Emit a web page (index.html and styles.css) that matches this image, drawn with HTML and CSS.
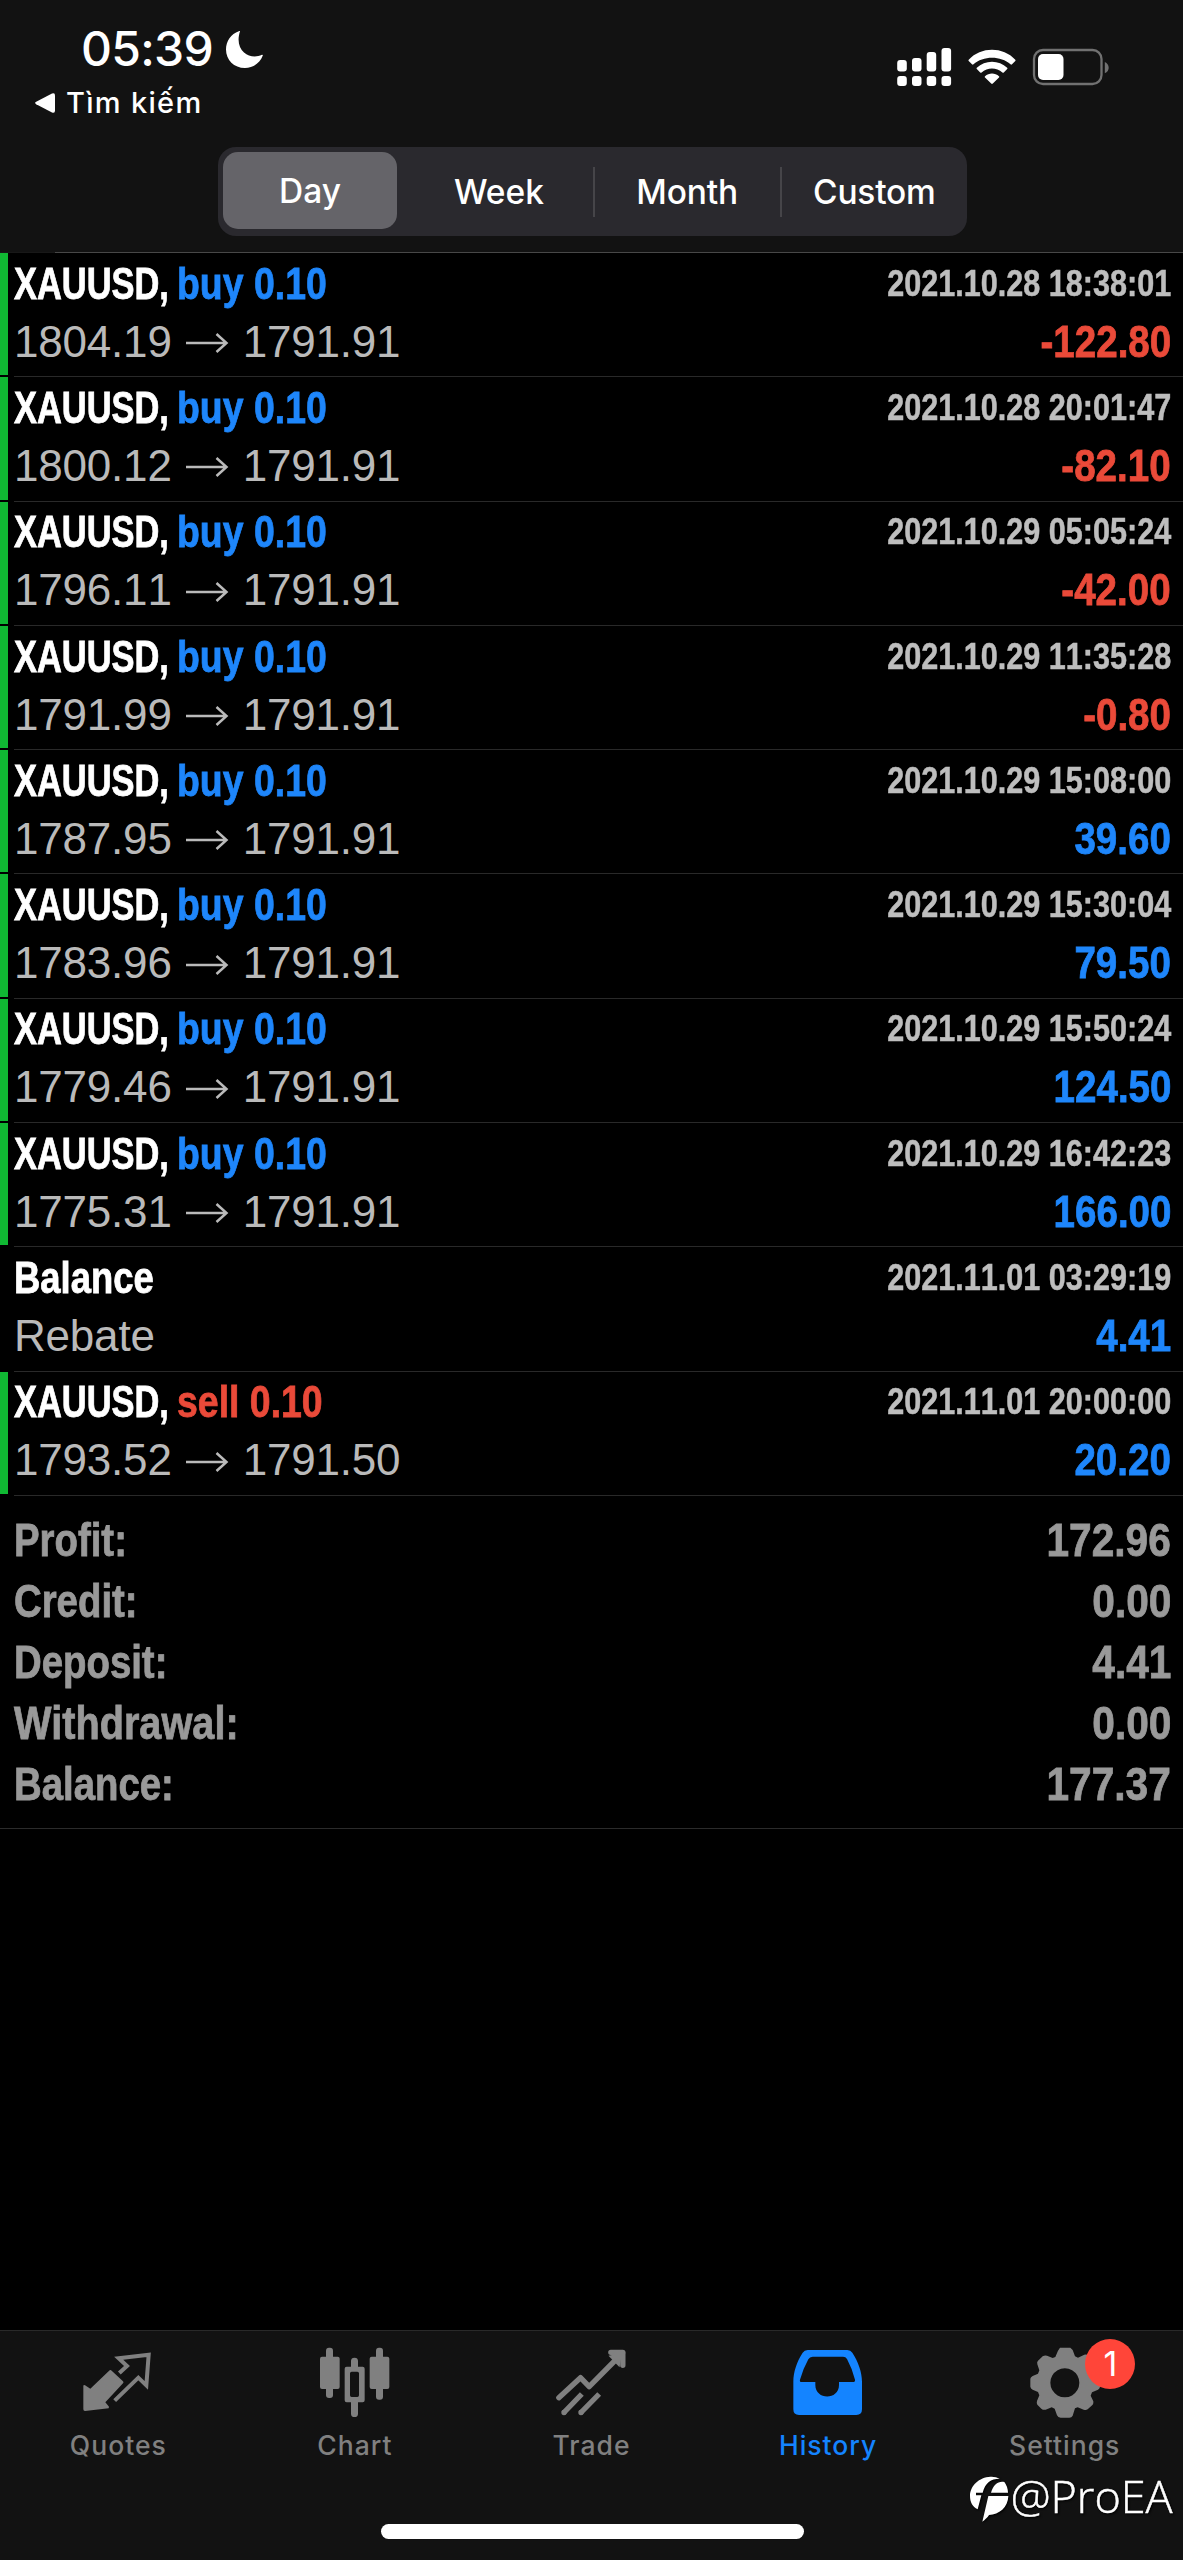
FILE: index.html
```html
<!DOCTYPE html>
<html lang="en">
<head>
<meta charset="utf-8">
<title>History</title>
<link rel="stylesheet" href="styles.css">
</head>
<body>
<div class="screen">
  <header class="header">
    <div class="status">
      <div class="status-left">
        <div class="clock"><span class="time">05:39</span>
          <svg class="moon" viewBox="0 0 37 37"><path d="M14 .3C11 10 13 17 18 21.5c5 4.300 12 5 18 2.300.6-.2 1 .2.8.8C34 32 27 37 19 37 8 37 0 29 0 18.500 0 10 5 3 12.800.2 13.800-.2 14.300-.2 14 .3Z"/></svg>
        </div>
        <div class="back">
          <svg class="back-arrow" viewBox="0 0 20 20"><path d="M1.200 8.800 17 .6Q20-.6 20 2.500v15Q20 20.600 17 19.400L1.200 11.200Q-1 10 1.200 8.800Z"/></svg>
          <span class="back-text">Tìm kiếm</span>
        </div>
      </div>
      <svg class="indicators" viewBox="897 45 213 44">
        <g fill="#fff">
          <rect x="897.200" y="60" width="9.600" height="11.500" rx="3"/><rect x="912" y="58" width="9.500" height="13.500" rx="3"/><rect x="926.700" y="52" width="9.500" height="19.500" rx="3"/><rect x="941.500" y="48" width="9.600" height="23.500" rx="3"/>
          <rect x="897.200" y="76" width="9.600" height="10" rx="3"/><rect x="912" y="76" width="9.500" height="10" rx="3"/><rect x="926.700" y="76" width="9.500" height="10" rx="3"/><rect x="941.500" y="76" width="9.600" height="10" rx="3"/>
          <path d="M968.700 59.700C981 46.400 1003 46.400 1015.300 59.700q.6.700 0 1.300l-3.300 3.300q-.8.700-1.500 0C1001 55.500 983 55.500 973.500 64.300q-.7.700-1.500 0L968.700 61q-.6-.6 0-1.300Z"/>
          <path d="M976.800 67.800C985 59.700 999 59.700 1007.200 67.800q.6.700 0 1.300l-3.400 3.400q-.7.600-1.400 0C996.500 67.300 987.500 67.300 981.600 72.500q-.7.600-1.400 0L976.800 69.100q-.6-.6 0-1.300Z"/>
          <path d="M985 76.200c4-3.600 10-3.600 14 0q.7.700 0 1.300l-6.200 6.100q-.8.800-1.600 0L985 77.500q-.7-.6 0-1.300Z"/>
          <rect x="1038" y="54" width="25.500" height="26" rx="5"/>
        </g>
        <rect x="1034" y="50" width="67.500" height="34" rx="9" fill="none" stroke="#717171" stroke-width="2.300"/>
        <path d="M1104.800 62c5.200 2.300 5.200 9 0 11.300Z" fill="#717171"/>
      </svg>
    </div>
    <nav class="segments">
      <div class="segment active"><span>Day</span></div>
      <div class="segment"><span>Week</span></div>
      <div class="segment split"><span>Month</span></div>
      <div class="segment split"><span>Custom</span></div>
    </nav>
  </header>

  <main class="content">
    <div class="deal"><i class="bar"></i><div class="deal-body">
      <div class="line"><span class="title"><b class="symbol">XAUUSD,</b><b class="side buy">buy 0.10</b></span><b class="date">2021.10.28 18:38:01</b></div>
      <div class="line"><span class="prices">1804.19<svg class="arrow" viewBox="0 0 44 22"><path d="M1 11H41M31.500 2 41.500 11 31.500 20"/></svg>1791.91</span><b class="amount loss">-122.80</b></div></div></div>
    <div class="deal"><i class="bar"></i><div class="deal-body">
      <div class="line"><span class="title"><b class="symbol">XAUUSD,</b><b class="side buy">buy 0.10</b></span><b class="date">2021.10.28 20:01:47</b></div>
      <div class="line"><span class="prices">1800.12<svg class="arrow" viewBox="0 0 44 22"><path d="M1 11H41M31.500 2 41.500 11 31.500 20"/></svg>1791.91</span><b class="amount loss">-82.10</b></div></div></div>
    <div class="deal"><i class="bar"></i><div class="deal-body">
      <div class="line"><span class="title"><b class="symbol">XAUUSD,</b><b class="side buy">buy 0.10</b></span><b class="date">2021.10.29 05:05:24</b></div>
      <div class="line"><span class="prices">1796.11<svg class="arrow" viewBox="0 0 44 22"><path d="M1 11H41M31.500 2 41.500 11 31.500 20"/></svg>1791.91</span><b class="amount loss">-42.00</b></div></div></div>
    <div class="deal"><i class="bar"></i><div class="deal-body">
      <div class="line"><span class="title"><b class="symbol">XAUUSD,</b><b class="side buy">buy 0.10</b></span><b class="date">2021.10.29 11:35:28</b></div>
      <div class="line"><span class="prices">1791.99<svg class="arrow" viewBox="0 0 44 22"><path d="M1 11H41M31.500 2 41.500 11 31.500 20"/></svg>1791.91</span><b class="amount loss">-0.80</b></div></div></div>
    <div class="deal"><i class="bar"></i><div class="deal-body">
      <div class="line"><span class="title"><b class="symbol">XAUUSD,</b><b class="side buy">buy 0.10</b></span><b class="date">2021.10.29 15:08:00</b></div>
      <div class="line"><span class="prices">1787.95<svg class="arrow" viewBox="0 0 44 22"><path d="M1 11H41M31.500 2 41.500 11 31.500 20"/></svg>1791.91</span><b class="amount gain">39.60</b></div></div></div>
    <div class="deal"><i class="bar"></i><div class="deal-body">
      <div class="line"><span class="title"><b class="symbol">XAUUSD,</b><b class="side buy">buy 0.10</b></span><b class="date">2021.10.29 15:30:04</b></div>
      <div class="line"><span class="prices">1783.96<svg class="arrow" viewBox="0 0 44 22"><path d="M1 11H41M31.500 2 41.500 11 31.500 20"/></svg>1791.91</span><b class="amount gain">79.50</b></div></div></div>
    <div class="deal"><i class="bar"></i><div class="deal-body">
      <div class="line"><span class="title"><b class="symbol">XAUUSD,</b><b class="side buy">buy 0.10</b></span><b class="date">2021.10.29 15:50:24</b></div>
      <div class="line"><span class="prices">1779.46<svg class="arrow" viewBox="0 0 44 22"><path d="M1 11H41M31.500 2 41.500 11 31.500 20"/></svg>1791.91</span><b class="amount gain">124.50</b></div></div></div>
    <div class="deal"><i class="bar"></i><div class="deal-body">
      <div class="line"><span class="title"><b class="symbol">XAUUSD,</b><b class="side buy">buy 0.10</b></span><b class="date">2021.10.29 16:42:23</b></div>
      <div class="line"><span class="prices">1775.31<svg class="arrow" viewBox="0 0 44 22"><path d="M1 11H41M31.500 2 41.500 11 31.500 20"/></svg>1791.91</span><b class="amount gain">166.00</b></div></div></div>
    <div class="deal"><i class="bar none"></i><div class="deal-body">
      <div class="line"><span class="title"><b class="symbol wide">Balance</b></span><b class="date">2021.11.01 03:29:19</b></div>
      <div class="line"><span class="prices">Rebate</span><b class="amount gain">4.41</b></div></div></div>
    <div class="deal"><i class="bar"></i><div class="deal-body">
      <div class="line"><span class="title"><b class="symbol">XAUUSD,</b><b class="side sell">sell 0.10</b></span><b class="date">2021.11.01 20:00:00</b></div>
      <div class="line"><span class="prices">1793.52<svg class="arrow" viewBox="0 0 44 22"><path d="M1 11H41M31.500 2 41.500 11 31.500 20"/></svg>1791.50</span><b class="amount gain">20.20</b></div></div></div>

    <section class="summary">
      <div class="total"><b>Profit:</b><b class="value">172.96</b></div>
      <div class="total"><b>Credit:</b><b class="value">0.00</b></div>
      <div class="total"><b>Deposit:</b><b class="value">4.41</b></div>
      <div class="total"><b class="long">Withdrawal:</b><b class="value">0.00</b></div>
      <div class="total"><b>Balance:</b><b class="value">177.37</b></div>
    </section>
  </main>

  <footer class="footer">
    <nav class="tabs">
      <div class="tab">
        <svg viewBox="235 99 240 240"><path d="M330 181q3-2 6 1l34 32q3 3 0 6l-53 57 11 13-1 5-71 8q-5 0-5-5V229q0-6 5-3l16 10Z" fill="currentColor"/><path d="M359 189 382 168 357 145 447 134 440 226 416 203 345 272" fill="none" stroke="currentColor" stroke-width="12"/></svg>
        <span>Quotes</span></div>
      <div class="tab">
        <svg viewBox="945 99 240 240" fill="currentColor"><rect x="978" y="113" width="21" height="151" rx="9"/><rect x="960" y="140" width="59" height="97" rx="6"/><rect x="1128" y="113" width="21" height="156" rx="9"/><rect x="1109" y="140" width="59" height="97" rx="6"/><path fill-rule="evenodd" d="M1053 153q0-10 10.500-10t10.500 10v17h14q6 0 6 6v95q0 6-6 6h-14v34q0 10-10.500 10t-10.500-10v-34h-13q-6 0-6-6v-95q0-6 6-6h13ZM1055 185q-5 0-5 5v66q0 5 5 5h17q5 0 5-5v-66q0-5-5-5Z"/></svg>
        <span>Chart</span></div>
      <div class="tab">
        <svg viewBox="274.500 99 240 240" fill="none" stroke="currentColor" stroke-width="16" stroke-linejoin="round"><path d="M298 263 363 203 389 230 489 129" stroke-linecap="round"/><path d="M454 127H490V166" stroke-linecap="round"/><path d="M447 137 480 172 488 128Z" fill="currentColor" stroke="none"/><path d="M312 309 367 252M363 309 419 252"/><path d="M313.500 307.500h.01M364.500 307.500h.01" stroke-linecap="round"/></svg>
        <span>Trade</span></div>
      <div class="tab active">
        <svg viewBox="984 99 240 240"><path fill="currentColor" fill-rule="evenodd" d="M1043 120h119q10 0 15 8c18 28 29 58 29 87v83q0 17-17 17h-172q-17 0-17-17v-83c0-29 10-59 28-87q5-8 15-8ZM1058 140q-9 0-13 8-17 31-25 61-2 7 5 7h41v9c0 46 71 46 71 0v-9h42q7 0 6-7-7-30-24-62-4-7-12-7Z"/></svg>
        <span>History</span></div>
      <div class="tab">
        <svg viewBox="374 99 240 240"><path fill="currentColor" fill-rule="evenodd" d="M479 113h31l7 7 7 19 9 4 19-9q9-1 13 3l12 12q3 5 1 13l-7 18 4 11 17 6q6 3 7 9v25q-1 5-6 8l-18 8-4 10 8 17q1 7-2 10l-15 14q-5 3-12 1l-18-7-8 3-7 22q-3 6-10 6h-26q-8 0-11-7l-7-20-9-4-18 7q-7 2-13-3l-12-12q-3-4-1-11l7-17-4-10-16-7q-6-3-7-9v-24q1-5 7-8l16-7 4-10-6-18q-2-7 2-11l14-13q6-4 13-2l17 7 8-3 8-19Zm14.500 62a43.500 43.500 0 1 0 .01 0Z"/></svg>
        <em class="badge">1</em>
        <span>Settings</span></div>
    </nav>
    <div class="home"></div>
  </footer>
  <div class="watermark">
    <svg viewBox="209 499 116 140"><path fill="#fff" d="M270 501q16-1 28 6c-27 0-43 12-51 42h-20v8h16l-11 42C216 592 209 576 209 559c0-32 28-56 61-58ZM272 549c7-25 23-36 40-32q10 13 11 32ZM264 559h60c-1 34-28 56-58 57-5 8-12 14-20 20Z"/></svg><span>@ProEA</span>
  </div>
</div>
</body>
</html>
```
FILE: styles.css
```css
* { box-sizing: border-box; }
body { margin: 0; background: #000; color: #fff; font-family: "Liberation Sans", Arial, sans-serif; }
.screen { position: relative; width: 1183px; height: 2560px; display: flex; flex-direction: column; overflow: hidden; }

/* header */
.header { height: 253px; flex: none; background: linear-gradient(90deg, #181818 55px, #484848 55px) bottom / 100% 1px no-repeat #121212; font-family: Inter, sans-serif; }
.status { height: 147px; display: flex; justify-content: space-between; padding: 20px 73px 0 35px; }
.clock { display: flex; align-items: center; padding-left: 46px; height: 58px; }
.time { font-size: 48px; font-weight: 500; width: 145px; line-height: 58px; letter-spacing: -.7px; white-space: nowrap; }
.moon { width: 37px; height: 37px; fill: #fff; }
.back { display: flex; align-items: center; height: 34px; margin-top: 8px; gap: 11px; }
.back-arrow { width: 20px; height: 20px; fill: #fff; }
.back-text { font-size: 29px; font-weight: 500; line-height: 34px; letter-spacing: 1.300px; white-space: nowrap; }
.indicators { width: 213px; height: 44px; margin-top: 25px; }
.segments { display: grid; grid-template-columns: repeat(4, 1fr); width: 749px; height: 89px; margin-left: 218px; border-radius: 18px; background: #2a292e; }
.segment { display: flex; align-items: center; justify-content: center; font-size: 33.500px; font-weight: 500; line-height: 77px; }
.segment span { margin-top: 1px; }
.segment.active { width: 174px; height: 77px; margin: 5px; border-radius: 15px; background: #656469; }
.segment.split { background: linear-gradient(#464549, #464549) left center / 2px 50px no-repeat; }
.segment.split span { padding-left: 2px; letter-spacing: -.2px; }

/* deals */
.content { flex: 1; }
.deal { display: flex; height: 124.300px; }
.bar { width: 8px; margin-bottom: 2px; background: #10b933; }
.bar.none { background: none; }
.deal-body { flex: 1; margin-left: 6px; padding: 1.700px 12px 0 0; border-bottom: 1px solid #292929; }
.line { display: flex; justify-content: space-between; height: 58px; line-height: 58px; font-size: 44.300px; white-space: nowrap; }
.line b, .total b { -webkit-text-stroke: .8px currentColor; }
.title { display: flex; }
.symbol { width: 163px; transform: scaleX(.777); transform-origin: left; }
.symbol.wide { transform: scaleX(.822); }
.side { transform: scaleX(.845); transform-origin: left; }
.buy, .gain { color: #1e86fb; }
.sell, .loss { color: #ea4a39; }
.line .date { font-size: 36px; line-height: 57px; color: #bebebe; font-kerning: none; -webkit-text-stroke-width: .5px; transform: scaleX(.85); transform-origin: right; }
.prices { display: flex; align-items: center; font-size: 44px; color: #bababa; font-kerning: none; letter-spacing: -.2px; }
.arrow { width: 44px; height: 22px; margin: 3px 14px 0 13px; fill: none; stroke: #bababa; stroke-width: 2.500; }
.amount { font-kerning: none; transform: scaleX(.87); transform-origin: right; }

/* totals */
.summary { height: 333px; padding: 14.500px 12px 0 14px; border-bottom: 1px solid #2b2b2b; }
.total { display: flex; justify-content: space-between; height: 60.900px; line-height: 60.900px; font-size: 47px; color: #999; }
.total b { transform: scaleX(.816); transform-origin: left; }
.total .long { transform: scaleX(.845); }
.total .value { font-kerning: none; transform: scaleX(.865); transform-origin: right; }

/* tab bar */
.footer { height: 230px; flex: none; background: #121212; border-top: 1px solid #292929; font-family: Inter, sans-serif; }
.tabs { display: grid; grid-template-columns: repeat(5, 1fr); height: 193px; padding-top: 12px; }
.tab { position: relative; display: flex; flex-direction: column; align-items: center; gap: 6px; color: #808080; font-size: 26.500px; font-weight: 500; line-height: 32px; letter-spacing: 1px; }
.tab svg { width: 80px; height: 80px; }
.tab.active { color: #1484ff; }
.badge { position: absolute; left: 139px; top: -4px; width: 50px; height: 50px; border-radius: 50%; background: #ff4539; color: #fff; font-size: 34px; font-style: normal; font-weight: 400; line-height: 50px; letter-spacing: 0; text-align: center; }
.home { width: 423px; height: 15px; margin-left: 381px; border-radius: 8px; background: #fff; }
.watermark { position: absolute; left: 970px; top: 2472px; display: flex; font: 300 45px/50px "Open Sans", "Noto Sans", sans-serif; filter: drop-shadow(1px 1px 1px #000); }
.watermark svg { width: 38.700px; height: 46.700px; margin-top: 4.300px; }
.watermark span { margin: -1.500px 0 0 2px; white-space: nowrap; -webkit-text-stroke: .5px #fff; }
```
